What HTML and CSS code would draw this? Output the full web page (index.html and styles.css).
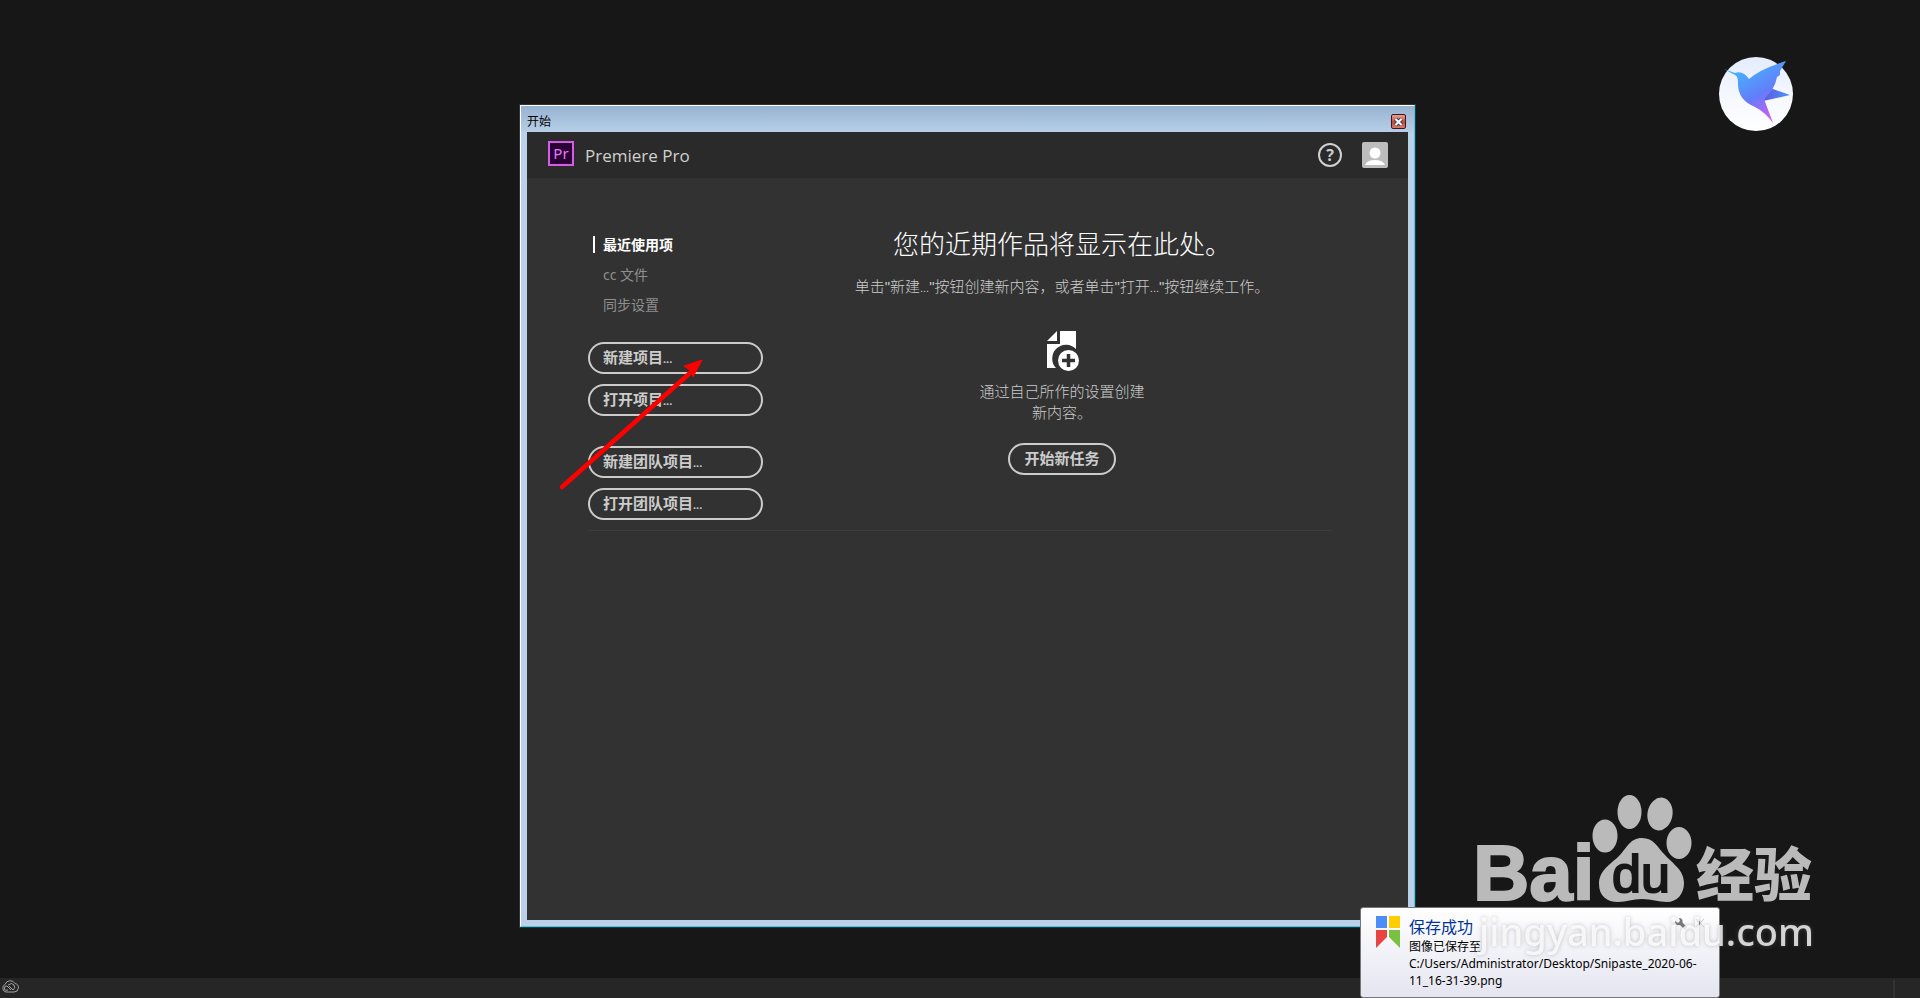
FILE: index.html
```html
<!DOCTYPE html>
<html lang="zh-CN">
<head>
<meta charset="utf-8">
<title>Premiere Pro</title>
<link rel="stylesheet" href="styles.css">
</head>
<body>
<main class="desktop">
  <section class="window">
    <div class="titlebar">
      <span class="titlebar-text">开始</span>
      <button class="close" aria-label="关闭">
        <svg width="9" height="8" viewBox="0 0 9 8"><path d="M1.500 1L7.500 7M7.500 1L1.500 7" stroke="#3b4459" stroke-width="4"/><path d="M1.500 1L7.500 7M7.500 1L1.500 7" stroke="#fff" stroke-width="2"/></svg>
      </button>
    </div>
    <div class="client">
      <header class="app-header">
        <span class="pr-logo">Pr</span>
        <h1 class="app-name">Premiere Pro</h1>
        <button class="icon-btn" aria-label="帮助"><span class="help">?</span></button>
        <button class="icon-btn" aria-label="帐户">
          <svg width="26" height="26" viewBox="0 0 26 26"><rect width="26" height="26" rx="2" fill="#bdbdbd"/><circle cx="13" cy="11" r="5.500" fill="#fff"/><path d="M3 23Q5 18 13 18T23 23Z" fill="#fff"/></svg>
        </button>
      </header>
      <div class="content">
        <aside class="sidebar">
          <nav class="nav">
            <a class="nav-item active" href="#">最近使用项</a>
            <a class="nav-item" href="#">cc 文件</a>
            <a class="nav-item" href="#">同步设置</a>
          </nav>
          <div class="group">
            <button class="pill">新建项目<span class="dots">...</span></button>
            <button class="pill">打开项目<span class="dots">...</span></button>
          </div>
          <div class="group team">
            <button class="pill">新建团队项目<span class="dots">...</span></button>
            <button class="pill">打开团队项目<span class="dots">...</span></button>
          </div>
        </aside>
        <section class="intro">
          <h2 class="headline">您的近期作品将显示在此处。</h2>
          <p class="hint">单击"新建<span class="dots">...</span>"按钮创建新内容，或者单击"打开<span class="dots">...</span>"按钮继续工作。</p>
          <svg class="new-doc" width="34" height="42" viewBox="0 0 34 42"><path d="M14 1H30V19A13 13 0 0 0 10 38H1V14H14Z" fill="#fff"/><path d="M1 11L11 1V11Z" fill="#fff"/><circle cx="22.500" cy="30.500" r="10.500" fill="#fff"/><path d="M22.500 24V37M16 30.500H29" stroke="#323232" stroke-width="3.500"/></svg>
          <p class="doc-text">通过自己所作的设置创建<br>新内容。</p>
          <button class="pill start">开始新任务</button>
        </section>
      </div>
    </div>
  </section>

  <svg class="arrow" width="150" height="140" viewBox="0 0 150 140"><path d="M7 132L135 18" stroke="#f00" stroke-width="4.500" stroke-linecap="round"/><path d="M147 5L129 11L136 16L138 22Z" fill="#f00" stroke="#f00"/></svg>

  <svg class="bird" width="76" height="76" viewBox="0 0 76 76">
    <defs>
      <linearGradient id="disc" x1="0" y1="0" x2="0" y2="1"><stop offset="0" stop-color="#e4ecfd"/><stop offset=".6" stop-color="#f7f9ff"/><stop offset="1" stop-color="#fff"/></linearGradient>
      <linearGradient id="body" gradientUnits="userSpaceOnUse" x1="20" y1="12" x2="50" y2="66"><stop offset="0" stop-color="#45b5fa"/><stop offset=".55" stop-color="#647cfb"/><stop offset="1" stop-color="#d85bf0"/></linearGradient>
      <linearGradient id="wing" x1="0" y1="0" x2="1" y2="0"><stop offset="0" stop-color="#5e58dd"/><stop offset="1" stop-color="#4d95f7"/></linearGradient>
    </defs>
    <circle cx="38" cy="38" r="37" fill="url(#disc)"/>
    <path d="M52 32L72 39L45 45Z" fill="url(#wing)"/>
    <path d="M6 13L17 17Q25 14 31 23Q42 13 68 5L62 15V19L59 21Q57 33 46 43L55 67Q47 56 37 51Q19 44 20 26Q20 19 15 18Z" fill="url(#body)"/>
  </svg>

  <aside class="toast">
    <svg class="toast-logo" width="24" height="32" viewBox="0 0 24 32"><path d="M0 0H11V12H0Z" fill="#4c8df6"/><path d="M13 0H24V12H13Z" fill="#fc0"/><path d="M0 14H11V21L0 32Z" fill="#e94343"/><path d="M13 14H24V32L13 21Z" fill="#7ac142"/></svg>
    <div class="toast-body">
      <h3 class="toast-title">保存成功</h3>
      <p class="toast-text">图像已保存至<br>C:/Users/Administrator/Desktop/Snipaste_2020-06-11_16-31-39.png</p>
    </div>
    <div class="toast-actions">
      <button class="tool" aria-label="设置"><svg width="12" height="12" viewBox="0 0 12 12"><path d="M4 0Q8 0 7.500 4.500L12 9.500L10 12L5 7Q0 8 0 3L3 5L5 3Z" fill="#777"/></svg></button>
      <button class="tool" aria-label="关闭通知"><svg width="10" height="10" viewBox="0 0 10 10"><path d="M1 1L5 5L1 9" fill="none" stroke="#888" stroke-width="2"/><path d="M9 1L5 5L9 9" fill="none" stroke="#ccc"/></svg></button>
    </div>
  </aside>

  <svg class="watermark" width="360" height="180" viewBox="0 0 360 180">
    <g fill="#bababa">
      <text class="wm-bai" x="3" y="110">Bai</text>
      <ellipse cx="135" cy="46" rx="12.500" ry="16.500"/>
      <ellipse cx="159.500" cy="22" rx="12" ry="17"/>
      <ellipse cx="190" cy="24" rx="12.500" ry="16.500" transform="rotate(10 190 24)"/>
      <ellipse cx="209" cy="53" rx="12.500" ry="16"/>
      <path d="M172 48C160 48 157 58 149 66C141 74 129 80 129 94C129 106 137 112 148 112C157 112 162 109 172 109C182 109 188 112 197 112C207 112 214 104 214 93C214 80 203 74 195 65C187 57 184 48 172 48Z"/>
      <text class="wm-cn" x="226" y="106">经验</text>
    </g>
    <text class="wm-du" x="142" y="102">du</text>
    <text class="wm-url" x="9" y="156">jingyan.baidu.com</text>
  </svg>
</main>
<footer class="statusbar">
  <svg class="cc" width="18" height="14" viewBox="0 0 18 14" fill="none" stroke="#a5a5a5"><path d="M5 12A4 4 0 0 1 4 4.500A5.500 5.500 0 0 1 14 3.500A4.300 4.300 0 0 1 13 12Z"/><path d="M10 10L6 6Q4 5 3.500 8T7 10M7 5Q11 2 13 5T12 10L8 6"/></svg>
  <span class="status-split"></span>
</footer>
</body>
</html>
```
FILE: styles.css
```css
* { box-sizing: border-box; }
body {
  margin: 0;
  min-height: 100vh;
  display: flex;
  flex-direction: column;
  background: #171717;
  color: #ccc;
  font-family: "Noto Sans", "Noto Sans CJK SC", sans-serif;
  overflow: hidden;
}
h1, h2, h3, p { margin: 0; font-weight: 400; }
button { font: inherit; color: inherit; padding: 0; border: 0; background: none; }
a { color: inherit; text-decoration: none; }

.desktop { flex: 1; }
.statusbar {
  height: 20px;
  background: #262626;
  display: flex;
  justify-content: space-between;
  padding: 2px 25px 0 1px;
}
.status-split { width: 2px; height: 18px; background: #323232; }

.window {
  position: absolute;
  left: 520px;
  top: 105px;
  width: 895px;
  height: 822px;
  display: flex;
  flex-direction: column;
  padding: 0 6px 6px;
  border: 1px solid #fff;
  border-right-color: #35d0f0;
  border-bottom-color: #35d0f0;
  outline: 1px solid #333;
  background: linear-gradient(#97b3d0, #b9d1ea 28px);
}
.titlebar {
  height: 26px;
  display: flex;
  align-items: center;
  justify-content: space-between;
  padding: 5px 2px 0 0;
}
.titlebar-text { font-size: 12px; line-height: 20px; color: #000; }
.close {
  width: 15px;
  height: 15px;
  display: flex;
  align-items: center;
  justify-content: center;
  border: 1px solid #43141f;
  border-radius: 2px;
  background: linear-gradient(#e3a399, #c8503a 50%, #c0452f 51%, #d4806c);
}
.client { flex: 1; background: #323232; }
.app-header {
  height: 46px;
  display: flex;
  align-items: center;
  padding: 0 20px 0 21px;
  background: #2a2a2a;
}
.pr-logo {
  width: 26px;
  height: 25px;
  margin: 0 11px 3px 0;
  border: 2px solid #d65ce8;
  background: #2a0034;
  color: #e878f8;
  font-size: 15px;
  line-height: 20px;
  text-align: center;
}
.app-name {
  flex: 1;
  padding-top: 2px;
  font-family: "Open Sans", sans-serif;
  font-size: 17px;
  line-height: 24px;
  color: #d0d0d0;
}
.icon-btn { display: flex; margin-left: 20px; }
.help {
  width: 24px;
  height: 24px;
  border: 2px solid #d0d0d0;
  border-radius: 50%;
  font-size: 16px;
  font-weight: 700;
  line-height: 20px;
}

.content {
  display: flex;
  gap: 29px;
  margin: 0 76px 0 61px;
  padding: 51px 0 10px;
  border-bottom: 1px solid #3c3c3c;
}
.sidebar { width: 175px; }
.nav { margin-bottom: 23px; padding-left: 5px; }
.nav-item {
  display: flex;
  align-items: center;
  gap: 8px;
  height: 30px;
  font-size: 14px;
  color: #8f8f8f;
}
.nav-item::before { content: ""; width: 2px; height: 17px; }
.nav-item.active { color: #fff; font-weight: 700; }
.nav-item.active::before { background: #fff; }
.group { display: flex; flex-direction: column; gap: 10px; }
.team { margin-top: 30px; }
.pill {
  height: 32px;
  padding: 0 14px 2px 13px;
  border: 2px solid #ccc;
  border-radius: 16px;
  font-size: 15px;
  font-weight: 700;
  line-height: 26px;
  text-align: left;
}
.dots { font-size: 11px; }
.intro { flex: 1; display: flex; flex-direction: column; align-items: center; }
.headline { font-size: 26px; font-weight: 300; line-height: 30px; color: #fff; }
.hint {
  margin-top: 17px;
  font-family: "Liberation Sans", "Noto Sans CJK SC", sans-serif;
  font-size: 15px;
  font-weight: 300;
  line-height: 22px;
  white-space: nowrap;
}
.new-doc { margin: 31px 0 9px 2px; }
.doc-text { font-size: 15px; font-weight: 300; line-height: 21px; text-align: center; }
.start { margin-top: 20px; padding-left: 14px; }

.arrow { position: absolute; left: 555px; top: 355px; }
.bird { position: absolute; left: 1718px; top: 56px; }

.toast {
  position: absolute;
  left: 1360px;
  bottom: 0;
  width: 360px;
  height: 91px;
  display: flex;
  padding: 8px 10px 0 15px;
  border: 1px solid #767676;
  border-radius: 3px;
  background: linear-gradient(#fff, #e4e5f0);
}
.toast-logo { flex: none; margin-right: 9px; }
.toast-body { flex: 1; color: #000; }
.toast-title { font-size: 16px; line-height: 22px; color: #039; }
.toast-text { font-size: 12px; line-height: 17px; }
.toast-actions {
  position: absolute;
  right: 14px;
  top: 10px;
  display: flex;
  align-items: flex-start;
  gap: 8px;
}
.tool { display: flex; }

.watermark { position: absolute; left: 1470px; top: 790px; pointer-events: none; }
.wm-bai { font: 700 78px "Liberation Sans", sans-serif; stroke: #bababa; stroke-width: 2px; }
.wm-cn { font: 900 58px "Noto Sans CJK SC", sans-serif; }
.wm-du { font: 400 52px "Liberation Sans", sans-serif; fill: #171717; stroke: #171717; stroke-width: 2px; }
.wm-url {
  font: 500 38px "Noto Sans", sans-serif;
  fill: rgba(255, 255, 255, .8);
  filter: drop-shadow(0 0 2px rgba(110, 110, 120, .5));
}
```
